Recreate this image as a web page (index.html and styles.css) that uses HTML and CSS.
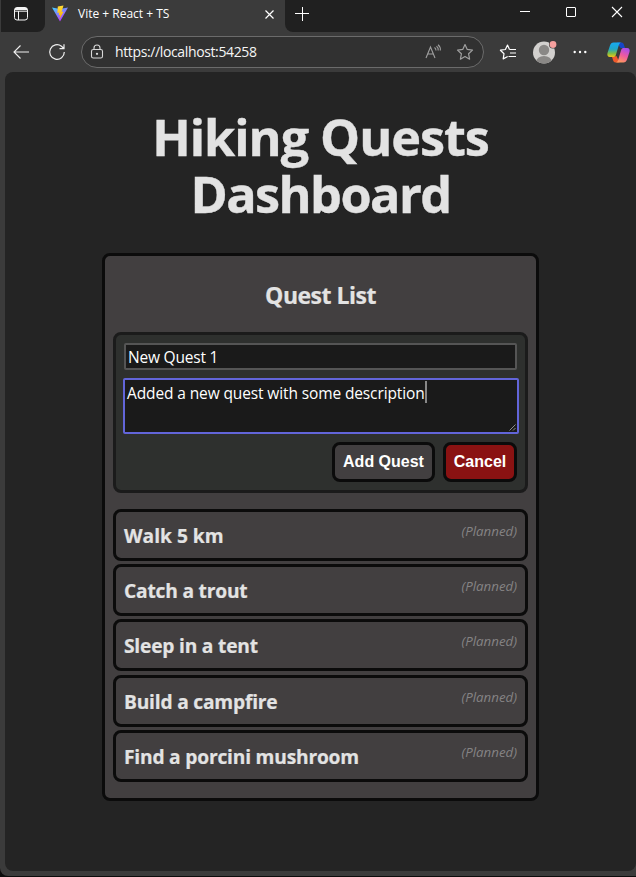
FILE: index.html
```
<!DOCTYPE html>
<html lang="en">
<head>
<meta charset="utf-8">
<title>Vite + React + TS</title>
<link rel="stylesheet" href="styles.css">
</head>
<body>
<div class="window">
  <header class="tabbar">
    <div class="tab-actions">
      <svg width="16" height="16" viewBox="0 0 16 16" fill="none" stroke="#f4f4f4"><rect x="1.500" y="1.500" width="13" height="12.500" rx="2.500"/><path d="M2 3h12" stroke-width="2"/><path d="M2 5.200h12M5.500 5v9" stroke-width="1"/></svg>
    </div>
    <div class="tab">
      <svg class="vite" width="18" height="17" viewBox="0 0 18 17">
        <defs>
          <linearGradient id="v" x1="0" y1="0" x2=".6" y2="1"><stop offset="0" stop-color="#41d1ff"/><stop offset="1" stop-color="#bd34fe"/></linearGradient>
          <linearGradient id="b" x1="0" y1="0" x2="0" y2="1"><stop offset="0" stop-color="#ffdd35"/><stop offset="1" stop-color="#ffa800"/></linearGradient>
        </defs>
        <path fill="url(#v)" d="M1 2.500 9 16.500 17 2.500 9 4z"/><path fill="url(#b)" d="m12.500.5-5.700 1.100-.4 6.300 1.800-.4-.5 2.800 1.600-.5-.8 4.200 4.200-7.500-2.100.4.900-3.100z"/>
      </svg>
      <span class="tab-title">Vite + React + TS</span>
      <svg class="tab-close" width="9" height="9" viewBox="0 0 9 9" stroke="#fff" stroke-width="1.200"><path d="m.5.500 8 8m0-8-8 8"/></svg>
    </div>
    <div class="tab-rest">
      <svg width="14" height="14" viewBox="0 0 14 14" stroke="#fff" stroke-width="1"><path d="M0 6.500h14M7.500 0v14"/></svg>
      <div class="controls">
        <svg width="10" height="10" viewBox="0 0 10 10" stroke="#fff"><path d="M0 4.500h10"/></svg>
        <svg width="10" height="10" viewBox="0 0 10 10" stroke="#fff" fill="none"><rect x=".5" y=".5" width="9" height="9" rx=".5"/></svg>
        <svg width="10" height="10" viewBox="0 0 10 10" stroke="#fff" stroke-width="1.100"><path d="m0 0 10 10M10 0 0 10"/></svg>
      </div>
    </div>
  </header>
  <nav class="toolbar">
    <svg class="back" width="16" height="14" viewBox="0 0 16 14" fill="none" stroke="#f0f0f0" stroke-width="1.100"><path d="M16 7H1M7.500.500 1 7l6.500 6.500"/></svg>
    <svg class="reload" width="18" height="18" viewBox="0 0 18 18" fill="none" stroke="#f0f0f0" stroke-width="1.200"><path d="M16.300 9A7.300 7.300 0 1 1 13.500 3.300L15.800 5.500M16 1.200v4.500h-4.500"/></svg>
    <div class="address">
      <svg class="lock" width="14" height="16" viewBox="0 0 14 16" fill="none" stroke="#d8d8d8" stroke-width="1.100"><rect x="1.500" y="5.500" width="11" height="8.500" rx="1.800"/><path d="M4 5.500V4a3 3 0 0 1 6 0v1.500"/><circle cx="7" cy="9.800" r=".6" fill="#d8d8d8"/></svg>
      <span class="url">https://localhost:54258</span>
      <svg class="read" width="17" height="16" viewBox="0 0 17 16" fill="none" stroke="#a0a0a0" stroke-width="1.100"><path d="M1 14 5.500 3 10 14M2.700 10h5.600M9.500 3.500q1.500 1 1.500 3M11.500 2.200q2 1.500 1.700 4.300M13 .8q2.800 2.200 2.300 5.700"/></svg>
      <svg class="star" width="18" height="18" viewBox="0 0 18 18" fill="none" stroke="#a0a0a0" stroke-width="1.200" stroke-linejoin="round"><path d="m9 1.500 2.250 4.900 5.250.7-3.900 3.700 1 5.400L9 13.600l-4.600 2.600 1-5.400L1.500 7.100l5.250-.7z"/></svg>
    </div>
    <svg class="favs" width="18" height="18" viewBox="0 0 18 18" fill="none" stroke="#fff" stroke-width="1.200" stroke-linejoin="round"><path d="M10.500 6.500 8.500 2 6.400 6.500l-5 .7L5 10.700 4.200 15.900 8.700 13.500M10.500 6.500h6.500M11 10h6M9.500 13.500H17"/></svg>
    <svg class="avatar" width="25" height="24" viewBox="0 0 25 24"><defs><clipPath id="a"><circle cx="11" cy="12.500" r="11"/></clipPath></defs><g clip-path="url(#a)"><path fill="#d2d0ce" d="M0 0h23v24H0z"/><circle cx="11" cy="10" r="5.200" fill="#8a8886"/><ellipse cx="11" cy="22" rx="8" ry="6" fill="#8a8886"/></g><circle cx="20" cy="4.500" r="4" fill="#3b3b3b"/><circle cx="20" cy="4.500" r="3.400" fill="#f6a09e"/></svg>
    <svg class="more" width="14" height="4" viewBox="0 0 14 4" fill="#fff"><circle cx="1.700" cy="2" r="1.200"/><circle cx="7" cy="2" r="1.200"/><circle cx="12.300" cy="2" r="1.200"/></svg>
    <svg class="copilot" width="23" height="21" viewBox="0 0 23 21">
      <defs>
        <linearGradient id="c1" x1="0" y1="0" x2="0" y2="1"><stop offset="0" stop-color="#16aaf0"/><stop offset=".45" stop-color="#20a6c8"/><stop offset=".75" stop-color="#7ebd45"/><stop offset="1" stop-color="#f2c51a"/></linearGradient>
        <linearGradient id="c2" x1=".7" y1="0" x2=".3" y2="1"><stop offset="0" stop-color="#a84cf0"/><stop offset=".5" stop-color="#ee5aa0"/><stop offset="1" stop-color="#ff9a5c"/></linearGradient>
      </defs>
      <path fill="#1646c8" d="M10 .5h4.500c1.500 0 2 1 2.500 2.500l1 3h-4.500z"/>
      <path fill="#f05a2c" d="m5 15 4.500-1 3 6.500H8.500c-1.500 0-2-1-2.500-2.500z"/>
      <path fill="url(#c1)" d="M6.500.5H14c-1.300.5-1.800 1.500-2.300 3L9 12.500C8.500 14.500 7.500 15 6 15H3C.6 15-.1 13 .5 11L3 3.500C3.700 1.500 4.700.5 6.500.500z"/>
      <path fill="url(#c2)" d="M16.500 20.500H9c1.300-.5 1.800-1.500 2.300-3L14 8.500C14.500 6.500 15.500 6 17 6h3c2.400 0 3.100 2 2.500 4L20 17.500c-.7 2-1.700 3-3.500 3z"/>
    </svg>
  </nav>
  <main class="page">
    <h1><span class="h-top">Hiking Quests</span><br><span class="h-bottom">Dashboard</span></h1>
    <section class="quests">
      <h2>Quest List</h2>
      <form class="quest-form">
        <div class="field">New Quest 1</div>
        <div class="area"><span class="area-text">Added a new quest with some description</span><span class="caret"></span>
          <svg class="grip" width="7" height="7" viewBox="0 0 7 7" stroke="#aaa" stroke-width=".8"><path d="M.5 6.500l6-6M4 6.500 6.500 4"/></svg>
        </div>
        <div class="actions">
          <button type="button" class="btn add">Add Quest</button>
          <button type="button" class="btn cancel">Cancel</button>
        </div>
      </form>
      <ul class="list">
        <li><h3 class="q1">Walk 5 km</h3><em>(Planned)</em></li>
        <li><h3>Catch a trout</h3><em>(Planned)</em></li>
        <li><h3>Sleep in a tent</h3><em>(Planned)</em></li>
        <li><h3>Build a campfire</h3><em>(Planned)</em></li>
        <li><h3>Find a porcini mushroom</h3><em>(Planned)</em></li>
      </ul>
    </section>
  </main>
</div>
</body>
</html>
```
FILE: styles.css
```
* { box-sizing: border-box; }
body { margin: 0; background: #0c0c0c; font-family: "Open Sans", "Noto Sans", sans-serif; color: #e3e3e3; overflow: hidden; }
svg { display: block; flex: none; overflow: visible; }
.window { width: 636px; height: 876px; background: #3b3b3b; border-radius: 0 0 0 8px; display: flex; flex-direction: column; overflow: hidden; }

.tabbar { display: flex; height: 32px; flex: none; }
.tab-actions { width: 45px; background: #202020; border-radius: 0 0 8px 0; border-left: 1px solid #3b3b3b; padding: 6px 0 0 12px; }
.tab { width: 240px; display: flex; padding-left: 6px; }
.vite { margin-top: 5px; }
.tab-title { margin: 5px 0 0 9px; width: 92px; font-size: 12px; line-height: 18px; color: #fff; white-space: nowrap; letter-spacing: 0; }
.tab-close { margin: 10px 0 0 95px; }
.tab-rest { flex: 1; display: flex; background: #202020; border-radius: 0 0 0 8px; padding: 7px 14px 0 10px; justify-content: space-between; }
.controls { display: flex; gap: 36px; }

.toolbar { height: 40px; flex: none; display: flex; align-items: center; padding-left: 13px; }
.reload { margin-left: 19px; }
.address { width: 403px; height: 32px; margin-left: 15px; border: 1px solid #6b6b6b; border-radius: 16px; background: #313131; display: flex; align-items: center; padding-left: 8px; }
.url { width: 160px; margin-left: 11px; font-size: 14px; line-height: 20px; color: #f5f5f5; white-space: nowrap; letter-spacing: -.37px; }
.read { margin-left: 150px; }
.star { margin-left: 14px; }
.favs { margin-left: 15px; }
.avatar { margin-left: 16px; margin-top: -1px; }
.more { margin-left: 15px; }
.copilot { margin-left: 20px; }

.page { width: 631px; height: 799px; margin-left: 5px; background: #242424; border-radius: 8px; padding-top: 36px; display: flex; flex-direction: column; align-items: center; }
h1 { margin: 0; font-size: 50.400px; line-height: 57px; font-weight: 700; text-align: center; white-space: nowrap; -webkit-text-stroke: .4px; }
.h-top { letter-spacing: -1.050px; }
.h-bottom { letter-spacing: -1.550px; }
.quests { width: 437px; height: 548px; margin-top: 31px; border: 3px solid #0b0b0b; border-radius: 8px; background: #423f40; padding: 0 8px; }
h2 { margin: 24px 0 0; height: 52px; font-size: 23px; line-height: 30px; text-align: center; letter-spacing: -.5px; -webkit-text-stroke: .2px; }
.quest-form { height: 161px; border: 3px solid #1b1b1b; border-radius: 8px; background: #2e302e; padding: 8px 7px; }
.field { height: 27px; margin: 0 1px; border: 2px solid #555; border-radius: 2px; background: #1a1a1a; color: #fff; font-size: 15.500px; line-height: 24px; padding-left: 2px; white-space: nowrap; letter-spacing: -.2px; }
.area { position: relative; display: flex; height: 56px; width: 396px; margin-top: 8px; border: 2px solid #6265d9; border-radius: 2px; background: #1a1a1a; color: #fff; font-size: 15.500px; line-height: 25px; padding: 1px 2px; white-space: nowrap; letter-spacing: -.120px; }
.caret { width: 2px; height: 22px; background: #888; }
.grip { position: absolute; right: 1px; bottom: 1px; }
.actions { display: flex; justify-content: flex-end; gap: 8px; margin: 8px 1px 0; }
.btn { height: 40px; padding: 0; border: 3px solid #0b0b0b; border-radius: 8px; color: #fff; font: 700 16px "Liberation Sans", sans-serif; white-space: nowrap; }
.add { width: 103px; background: #423f40; }
.cancel { width: 74px; background: #8a1212; }
.list { list-style: none; margin: 16px 0 0; padding: 0; display: flex; flex-direction: column; gap: 3.200px; }
.list li { height: 52px; flex: none; border: 3px solid #0b0b0b; border-radius: 8px; background: #423f40; display: flex; justify-content: space-between; padding: 0 8px; }
h3 { margin: 10px 0 0; font-size: 19.200px; line-height: 28px; white-space: nowrap; letter-spacing: -.2px; -webkit-text-stroke: .2px; }
.q1 { letter-spacing: 0; }
em { margin-top: 9px; font-size: 13.300px; line-height: 20px; color: #858384; white-space: nowrap; }
```
